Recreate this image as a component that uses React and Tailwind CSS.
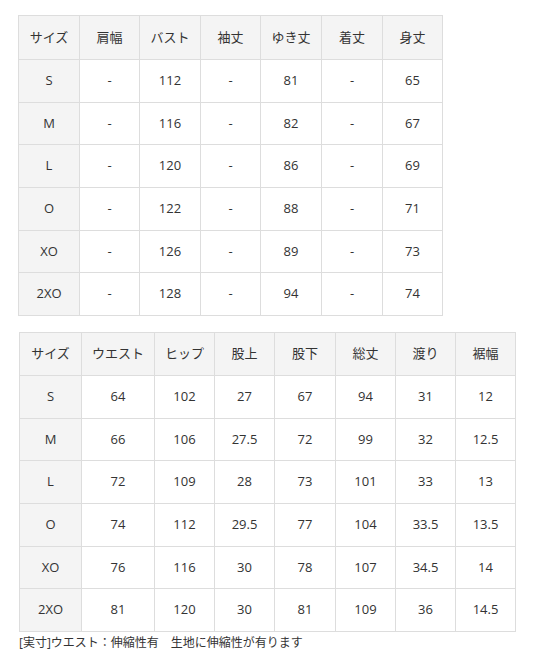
import React from "react";

const t1Head = ["サイズ", "肩幅", "バスト", "袖丈", "ゆき丈", "着丈", "身丈"];
const t1Rows = [
  ["S", "-", "112", "-", "81", "-", "65"],
  ["M", "-", "116", "-", "82", "-", "67"],
  ["L", "-", "120", "-", "86", "-", "69"],
  ["O", "-", "122", "-", "88", "-", "71"],
  ["XO", "-", "126", "-", "89", "-", "73"],
  ["2XO", "-", "128", "-", "94", "-", "74"],
];
const t1W = [61, 60, 61, 60, 61, 61, 60];

const t2Head = ["サイズ", "ウエスト", "ヒップ", "股上", "股下", "総丈", "渡り", "裾幅"];
const t2Rows = [
  ["S", "64", "102", "27", "67", "94", "31", "12"],
  ["M", "66", "106", "27.5", "72", "99", "32", "12.5"],
  ["L", "72", "109", "28", "73", "101", "33", "13"],
  ["O", "74", "112", "29.5", "77", "104", "33.5", "13.5"],
  ["XO", "76", "116", "30", "78", "107", "34.5", "14"],
  ["2XO", "81", "120", "30", "81", "109", "36", "14.5"],
];
const t2W = [62, 73, 60, 60, 61, 60, 60, 60];

function SizeTable({ head, rows, widths, headH, rowH }) {
  return (
    <table className="border-collapse table-fixed text-[13px] text-[#333]">
      <colgroup>
        {widths.map((w, i) => (
          <col key={i} style={{ width: w }} />
        ))}
      </colgroup>
      <thead>
        <tr className={headH}>
          {head.map((h, i) => (
            <th
              key={i}
              className="border border-[#dddddd] bg-[#f4f4f4] font-normal text-center p-0"
            >
              {h}
            </th>
          ))}
        </tr>
      </thead>
      <tbody>
        {rows.map((r, ri) => (
          <tr key={ri} className={rowH}>
            {r.map((c, ci) => (
              <td
                key={ci}
                className={
                  "border border-[#dddddd] text-center p-0 " +
                  (ci === 0 ? "bg-[#f4f4f4]" : "bg-white")
                }
              >
                {c}
              </td>
            ))}
          </tr>
        ))}
      </tbody>
    </table>
  );
}

export default function App() {
  return (
    <div
      className="w-[535px] h-[659px] bg-white overflow-hidden"
      style={{ fontFamily: '"Open Sans", "Noto Sans CJK JP", sans-serif' }}
    >
      <div className="pt-[15px] pl-[18px]">
        <SizeTable
          head={t1Head}
          rows={t1Rows}
          widths={t1W}
          headH="h-[44px]"
          rowH="h-[42.67px]"
        />
      </div>
      <div className="pt-[16px] pl-[19px]">
        <SizeTable
          head={t2Head}
          rows={t2Rows}
          widths={t2W}
          headH="h-[43px]"
          rowH="h-[42.67px]"
        />
        <p className="text-[12px] leading-[20px] text-[#333] mt-[1px]">
          [実寸]ウエスト：伸縮性有　生地に伸縮性が有ります
        </p>
      </div>
    </div>
  );
}
